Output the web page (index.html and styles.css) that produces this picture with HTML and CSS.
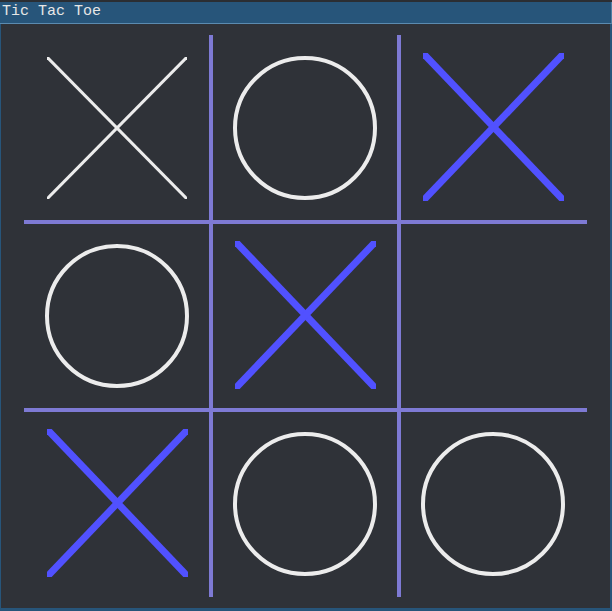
FILE: index.html
```html
<!DOCTYPE html>
<html>
<head>
<meta charset="utf-8">
<title>Tic Tac Toe</title>
<link rel="stylesheet" href="styles.css">
</head>
<body>
<div class="window">
  <div class="titlebar">Tic Tac Toe</div>
  <div class="content">
    <div class="board">
      <div class="cell">
        <svg class="mark" viewBox="0 0 188 188"><defs><clipPath id="c1"><rect x="24" y="23" width="140" height="142"/></clipPath></defs><g clip-path="url(#c1)" class="x-white"><line x1="20" y1="19" x2="168" y2="169"/><line x1="168" y1="19" x2="20" y2="169"/></g></svg>
      </div>
      <div class="cell">
        <svg class="mark" viewBox="0 0 188 188"><circle class="o" cx="94" cy="94" r="70"/></svg>
      </div>
      <div class="cell">
        <svg class="mark" viewBox="0 0 188 188"><defs><clipPath id="c3"><rect x="24" y="19" width="141" height="148"/></clipPath></defs><g clip-path="url(#c3)" class="x-blue"><line x1="20" y1="15" x2="169" y2="171"/><line x1="169" y1="15" x2="20" y2="171"/></g></svg>
      </div>
      <div class="cell">
        <svg class="mark" viewBox="0 0 188 188"><circle class="o" cx="94" cy="94" r="70"/></svg>
      </div>
      <div class="cell">
        <svg class="mark" viewBox="0 0 188 188"><defs><clipPath id="c5"><rect x="24" y="19" width="141" height="148"/></clipPath></defs><g clip-path="url(#c5)" class="x-blue"><line x1="20" y1="15" x2="169" y2="171"/><line x1="169" y1="15" x2="20" y2="171"/></g></svg>
      </div>
      <div class="cell"></div>
      <div class="cell">
        <svg class="mark" viewBox="0 0 188 188"><defs><clipPath id="c7"><rect x="24" y="19" width="141" height="148"/></clipPath></defs><g clip-path="url(#c7)" class="x-blue"><line x1="20" y1="15" x2="169" y2="171"/><line x1="169" y1="15" x2="20" y2="171"/></g></svg>
      </div>
      <div class="cell">
        <svg class="mark" viewBox="0 0 188 188"><circle class="o" cx="94" cy="94" r="70"/></svg>
      </div>
      <div class="cell">
        <svg class="mark" viewBox="0 0 188 188"><circle class="o" cx="94" cy="94" r="70"/></svg>
      </div>
      <svg class="gridlines" viewBox="0 0 564 564">
        <rect x="186" y="1" width="4" height="562"/>
        <rect x="374" y="1" width="4" height="562"/>
        <rect x="1" y="186" width="563" height="4"/>
        <rect x="1" y="374" width="563" height="4"/>
      </svg>
    </div>
  </div>
</div>
</body>
</html>
```

FILE: styles.css
```css
html, body {
  margin: 0;
  padding: 0;
  background: #2b2e33;
  width: 612px;
  height: 611px;
  overflow: hidden;
}

.window {
  margin-top: 2px;
  width: 612px;
  height: 609px;
  display: flex;
  flex-direction: column;
}

.titlebar {
  box-sizing: border-box;
  height: 22px;
  background: #27557a;
  border-bottom: 1px solid #5b8bb0;
  border-right: 1px solid #4d7ea3;
  color: #e6e6e6;
  font-family: "Liberation Mono", monospace;
  font-size: 15px;
  line-height: 19px;
  padding-left: 2px;
}

.content {
  flex: 1;
  background: #2f3238;
  border-left: 1px solid #27557a;
  border-right: 2px solid #27557a;
  border-bottom: 3px solid #27557a;
  padding: 10px 0 0 22px;
}

.board {
  position: relative;
  width: 564px;
  height: 564px;
  display: grid;
  grid-template-columns: repeat(3, 188px);
  grid-template-rows: repeat(3, 188px);
}

.cell {
  width: 188px;
  height: 188px;
}

.mark {
  display: block;
  width: 188px;
  height: 188px;
}

.o {
  fill: none;
  stroke: #ececec;
  stroke-width: 4;
}

.x-white line {
  stroke: #ececec;
  stroke-width: 3;
}

.x-blue line {
  stroke: #5151ff;
  stroke-width: 7;
}

.gridlines {
  position: absolute;
  left: 0;
  top: 0;
  width: 564px;
  height: 564px;
  fill: #7e7ad4;
}
```
